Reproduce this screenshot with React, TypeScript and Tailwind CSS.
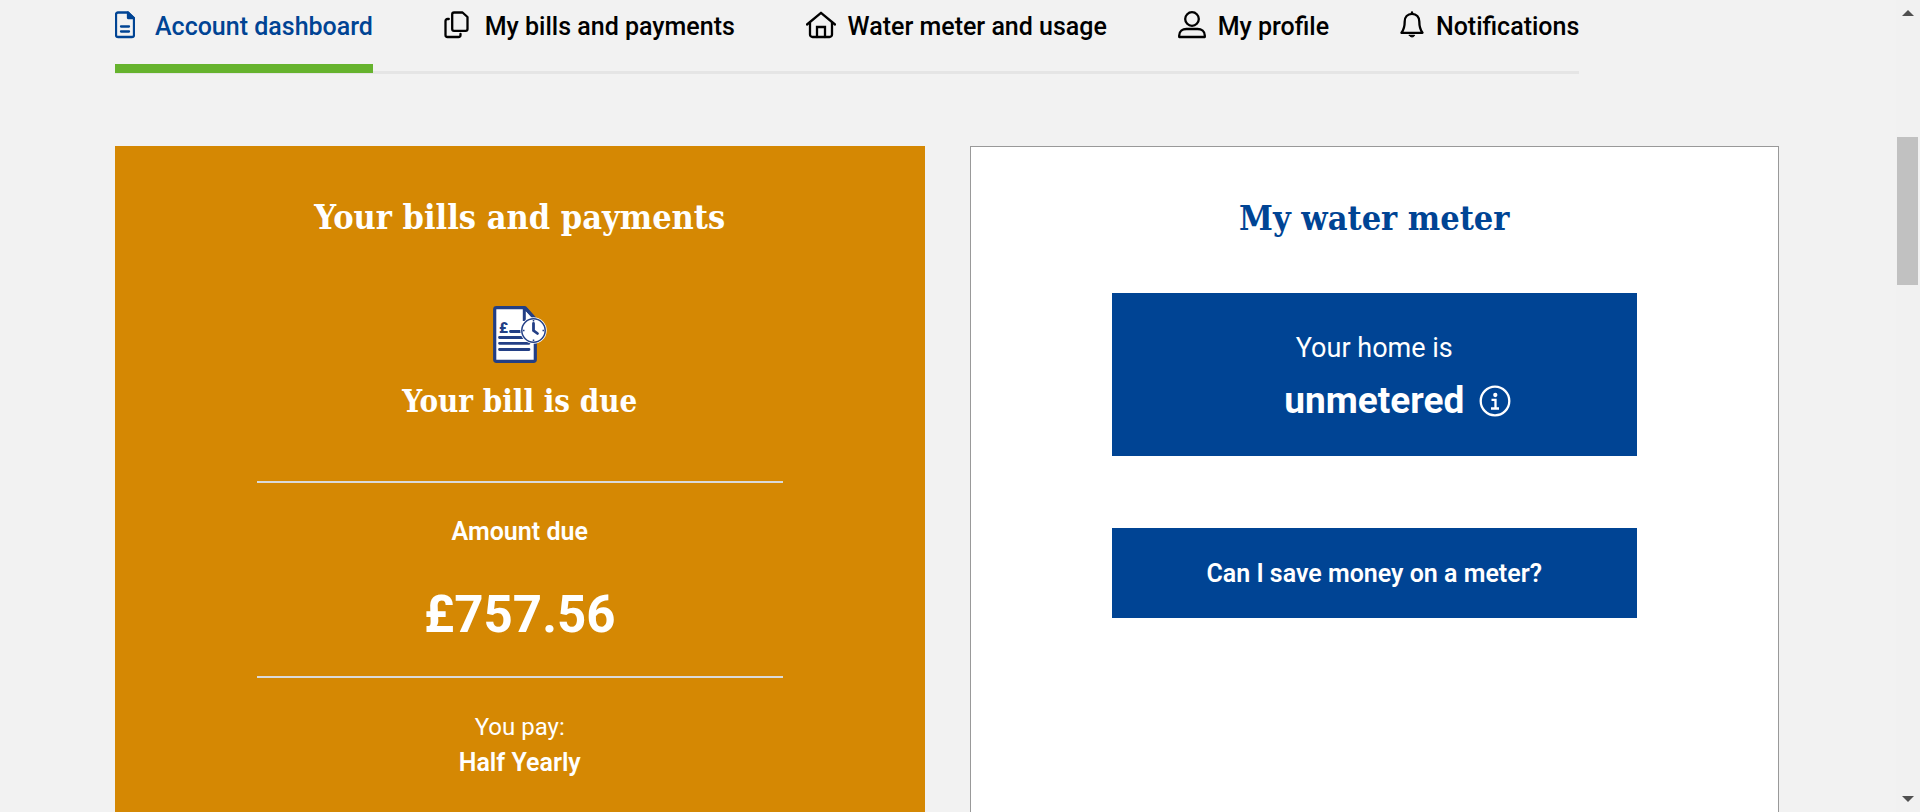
import type { ReactNode } from 'react';

const stroke = {
  fill: 'none',
  stroke: 'currentColor',
  strokeWidth: 2.3,
  strokeLinejoin: 'round' as const,
  strokeLinecap: 'round' as const,
};

function DocumentIcon() {
  return (
    <svg width="20" height="28" viewBox="0 0 20 28" aria-hidden="true" {...stroke}>
      <path d="M13 1.500H3a2 2 0 0 0-2 2V24a2 2 0 0 0 2 2h14a2 2 0 0 0 2-2V7.500z" />
      <path d="M13 1.500V7h6z" fill="currentColor" />
      <path d="M6 15.500h8M6 20.500h8" />
    </svg>
  );
}

function CopyIcon() {
  return (
    <svg width="25" height="28" viewBox="0 0 25 28" aria-hidden="true" {...stroke}>
      <path d="M10 1.500h8.500L23.500 6v12a1.800 1.800 0 0 1-1.800 1.800H10A1.800 1.800 0 0 1 8.200 18V3.300A1.800 1.800 0 0 1 10 1.500z" />
      <path d="M4.800 8H3.500a2 2 0 0 0-2 2v14a2 2 0 0 0 2 2h11a2 2 0 0 0 2-2v-1" />
    </svg>
  );
}

function HomeIcon() {
  return (
    <svg width="30" height="28" viewBox="0 0 30 28" aria-hidden="true" {...stroke}>
      <path d="M1 13.500 15 1.800 29 13.500" />
      <path d="M4 11.500V23.500a2.500 2.500 0 0 0 2.500 2.500h17a2.500 2.500 0 0 0 2.500-2.500V11.500" />
      <path d="M11 26V16h8v10" strokeLinejoin="miter" />
    </svg>
  );
}

function ProfileIcon() {
  return (
    <svg width="28" height="28" viewBox="0 0 28 28" aria-hidden="true" {...stroke}>
      <circle cx="14" cy="8" r="6.800" />
      <path d="M1.200 26v-1.500C1.200 20.500 4.500 18 8.500 18h11c4 0 7.300 2.500 7.300 6.500V26z" />
    </svg>
  );
}

function BellIcon() {
  return (
    <svg width="24" height="28" viewBox="0 0 24 28" aria-hidden="true" {...stroke}>
      <path d="M12 2.800C7.500 2.800 4.700 6.200 4.700 10.500c0 5.500-.7 8-3.200 11.300h21c-2.500-3.300-3.200-5.800-3.200-11.300C19.300 6.200 16.500 2.800 12 2.800z" />
      <path d="M12 1.500v1" />
      <path d="M9.300 24.300h5.400a2.800 2.300 0 0 1-5.400 0z" fill="currentColor" strokeWidth="1" />
    </svg>
  );
}

function BillIcon() {
  return (
    <svg width="54" height="57" viewBox="0 0 54 57" aria-hidden="true">
      <path
        d="M3.500 1.700H32L42.300 13V53.500a1.800 1.800 0 0 1-1.800 1.800h-37a1.800 1.800 0 0 1-1.800-1.800v-50a1.800 1.800 0 0 1 1.800-1.800z"
        fill="#fff"
        stroke="#233f85"
        strokeWidth="3.200"
        strokeLinejoin="round"
      />
      <path d="M31.300 2v13M32 2l11 12" stroke="#233f85" strokeWidth="3" fill="none" />
      <text x="6" y="27" fill="#233f85" className="font-['Roboto'] text-[15px] font-black">
        £
      </text>
      <path
        d="M17.500 25.500H30M6.500 31.500H30M6.500 37.300H36M6.500 43.500H36"
        stroke="#233f85"
        strokeWidth="2.800"
        strokeLinecap="round"
      />
      <circle cx="40.500" cy="24.500" r="13.200" fill="#fff" />
      <circle cx="40.500" cy="24.500" r="11.700" fill="#fff" stroke="#233f85" strokeWidth="1.500" />
      <path d="M40.500 14v1.500M40.500 33.500V35M30 24.500h1.500M49.500 24.500H51" stroke="#233f85" strokeWidth="1.500" />
      <path d="M40.500 17.500v7l4 3" fill="none" stroke="#233f85" strokeWidth="2.800" strokeLinecap="round" />
    </svg>
  );
}

function InfoIcon() {
  return (
    <svg width="32" height="32" viewBox="0 0 32 32" aria-hidden="true" fill="none" stroke="currentColor" strokeWidth="2.300">
      <circle cx="16" cy="16" r="14.300" />
      <circle cx="16.300" cy="10" r="1" fill="currentColor" />
      <path d="M12.500 14.800H16.500V23M12 23.500h8" />
    </svg>
  );
}

interface Tab {
  label: string;
  icon: ReactNode;
  gap: string;
  active?: boolean;
}

const tabs: Tab[] = [
  { label: 'Account dashboard', icon: <DocumentIcon />, gap: 'gap-5', active: true },
  { label: 'My bills and payments', icon: <CopyIcon />, gap: 'gap-4' },
  { label: 'Water meter and usage', icon: <HomeIcon />, gap: 'gap-3' },
  { label: 'My profile', icon: <ProfileIcon />, gap: 'gap-3' },
  { label: 'Notifications', icon: <BellIcon />, gap: 'gap-3' },
];

const slab = "font-['DejaVu_Serif_Condensed','DejaVu_Serif',serif] font-bold";

export default function App() {
  return (
    <div className="flex h-screen overflow-hidden bg-[#f2f2f2] font-['Roboto','Noto_Sans',sans-serif]">
      <main className="min-w-0 flex-1 pr-[117px] pl-[115px]">
        <nav className="flex w-[88%] justify-between border-b-[3px] border-[#e5e5e5]">
          {tabs.map((tab) => (
            <a
              key={tab.label}
              href="#"
              aria-current={tab.active ? 'page' : undefined}
              className={`-mb-[2px] flex items-start whitespace-nowrap border-b-[9px] pt-[11px] pb-[21px] text-[25px] leading-[32px] font-medium ${tab.gap} ${
                tab.active ? 'border-[#66b32e] text-[#004494]' : 'border-transparent text-black'
              }`}
            >
              {tab.icon}
              {tab.label}
            </a>
          ))}
        </nav>

        <div className="mt-[72px] grid grid-cols-2 gap-[45px] text-center">
          <section className="flex min-h-[720px] flex-col items-center bg-[#d58803] pt-[49px] text-white">
            <h2 className={`text-[34px] leading-[44px] ${slab}`}>Your bills and payments</h2>
            <div className="mt-[67px]">
              <BillIcon />
            </div>
            <h3 className={`mt-[18px] text-[31px] leading-[40px] ${slab}`}>Your bill is due</h3>
            <hr className="mt-[60px] w-[65%] border-t-2 border-[#dadada]" />
            <p className="mt-[31px] text-[25px] leading-[36px] font-semibold">Amount due</p>
            <p className="mt-[35px] text-[51px] leading-[60px] font-bold">£757.56</p>
            <hr className="mt-[31px] w-[65%] border-t-2 border-[#dadada]" />
            <p className="mt-[31px] text-2xl leading-[36px]">You pay:</p>
            <p className="text-[25px] leading-[36px] font-semibold">Half Yearly</p>
          </section>

          <section className="flex min-h-[720px] flex-col items-center border border-[#999] bg-white pt-[49px]">
            <h2 className={`text-[34px] leading-[44px] text-[#004494] ${slab}`}>My water meter</h2>
            <div className="mt-[53px] w-[65%] bg-[#004494] pt-[37px] pb-[31px] text-white">
              <p className="text-[27px] leading-[36px]">Your home is</p>
              <div className="mt-[11px] grid grid-cols-[1fr_auto_1fr] items-center gap-[15px]">
                <p className="col-start-2 text-[37px] leading-[48px] font-bold">unmetered</p>
                <button type="button" aria-label="More information" className="justify-self-start">
                  <InfoIcon />
                </button>
              </div>
            </div>
            <button
              type="button"
              className="mt-[72px] w-[65%] bg-[#004494] pt-[28px] pb-[26px] text-[25px] leading-[36px] font-semibold text-white"
            >
              Can I save money on a meter?
            </button>
          </section>
        </div>
      </main>

      <div aria-hidden="true" className="flex w-6 shrink-0 flex-col items-center bg-[#f1f1f1] py-[10px] pr-[1px]">
        <svg width="12" height="6" viewBox="0 0 12 6" fill="#505050">
          <path d="M0 6 6 0l6 6z" />
        </svg>
        <div className="mt-[121px] h-[148px] w-[21px] bg-[#c1c1c1]" />
        <svg width="12" height="6" viewBox="0 0 12 6" fill="#505050" className="mt-auto">
          <path d="M0 0l6 6 6-6z" />
        </svg>
      </div>
    </div>
  );
}
